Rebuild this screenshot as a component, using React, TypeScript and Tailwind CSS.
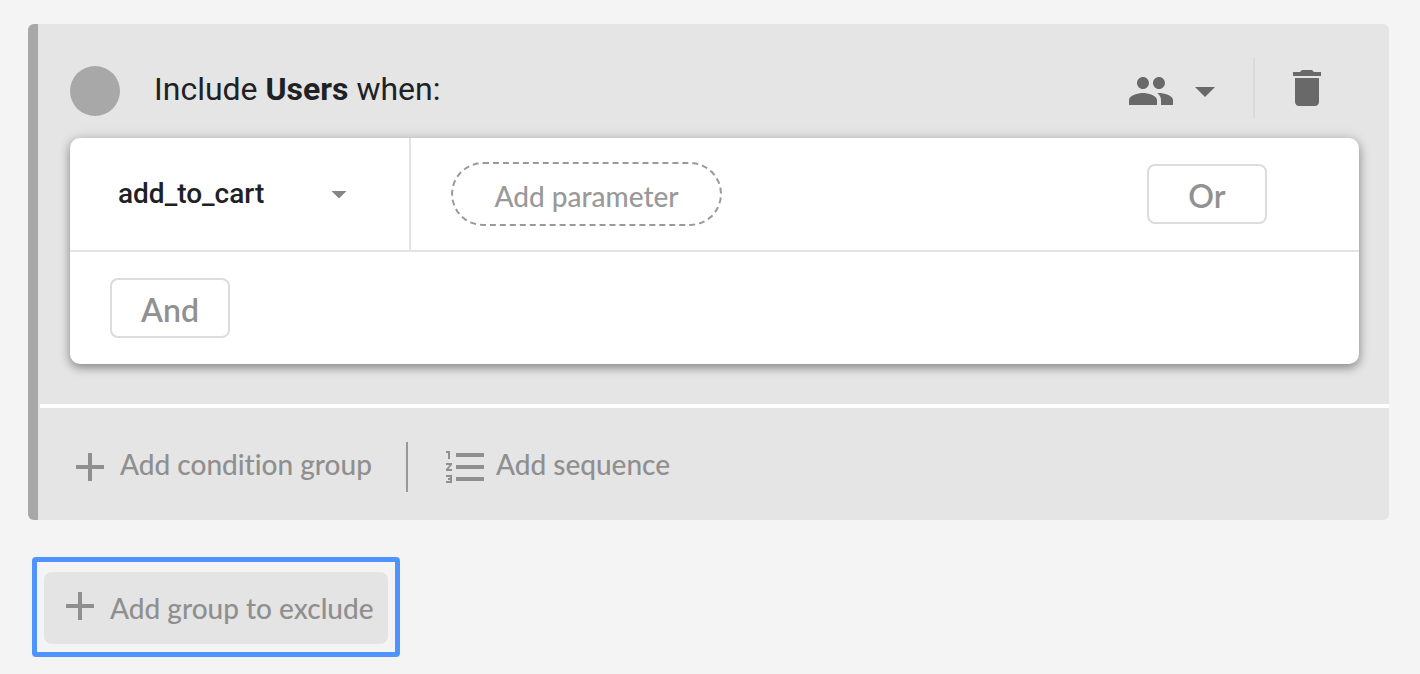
import clsx from "clsx"
import type { ReactNode } from "react"
import { MdAdd, MdArrowDropDown, MdDelete, MdFormatListNumbered, MdPeople } from "react-icons/md"

const LABEL_FONT = "font-['Lato','Liberation_Sans',sans-serif] [font-variant-ligatures:none]"

const OperatorButton = ({ children }: { children: ReactNode }) => (
	<button
		className={clsx(
			"h-15 w-30 shrink-0 rounded-lg border-2 border-[#dcdcdc] bg-white pt-1 text-[32px] leading-none font-semibold text-[#919191]",
			LABEL_FONT,
		)}
		type="button">
		{children}
	</button>
)

const ActionButton = ({ children, className }: { children: ReactNode; className?: string }) => (
	<button
		className={clsx(
			"flex items-center gap-1.5 text-[28px] leading-9 font-medium whitespace-nowrap text-[#8f8f8f]",
			LABEL_FONT,
			className,
		)}
		type="button">
		{children}
	</button>
)

const GroupHeader = () => (
	<header className="flex h-[114px] items-center pt-5 pr-[58px] pl-8">
		<span className="size-[50px] shrink-0 rounded-full bg-[#a8a8a8]" />
		<h2 className="ml-[34px] pb-1 text-[32px] leading-10 text-[#202124]">
			Include <b className="font-bold">Users</b> when:
		</h2>
		<div className="ml-auto flex items-center">
			<button aria-label="Scope" className="flex items-center gap-1.5 text-[#696969]" type="button">
				<MdPeople size={48} />
				<MdArrowDropDown size={48} />
			</button>
			<div className="ml-6 flex items-center gap-7 pb-1.5">
				<span className="h-15 w-0.5 bg-[#dadada]" />
				<button aria-label="Delete group" className="text-[#696969]" type="button">
					<MdDelete size={48} />
				</button>
			</div>
		</div>
	</header>
)

const ConditionCard = () => (
	<div className="mr-[30px] ml-8 rounded-[10px] bg-white shadow-[0_4px_10px_rgba(0,0,0,0.35),0_0_14px_rgba(0,0,0,0.12)]">
		<div className="flex h-[114px] border-b-2 border-[#e3e3e3]">
			<div className="relative flex w-[341px] shrink-0 items-center border-r-2 border-[#e3e3e3]">
				<select
					aria-label="Event"
					className="size-full appearance-none bg-transparent pl-12 text-[28px] font-medium text-[#202124]"
					defaultValue="add_to_cart">
					<option value="add_to_cart">add_to_cart</option>
				</select>
				<MdArrowDropDown className="pointer-events-none absolute right-[52px] text-[#858585]" size={36} />
			</div>
			<div className="flex flex-1 items-center justify-between pr-[92px] pl-10">
				<button
					className={clsx(
						"h-16 w-[271px] rounded-full border-2 border-dashed border-[#999999] pt-1 text-[28px] leading-none font-medium text-[#999999]",
						LABEL_FONT,
					)}
					type="button">
					Add parameter
				</button>
				<OperatorButton>Or</OperatorButton>
			</div>
		</div>
		<div className="flex h-28 items-center pl-10">
			<OperatorButton>And</OperatorButton>
		</div>
	</div>
)

export default function App() {
	return (
		<main className="min-h-screen bg-[#f4f4f4] pt-6 pr-[31px] pb-4 pl-7 font-['Roboto','Liberation_Sans',sans-serif]">
			<section className="rounded-md border-l-10 border-[#a8a8a8] bg-[#e5e5e5]">
				<GroupHeader />
				<ConditionCard />
				<div className="mt-10 ml-0.5 h-1 bg-white" />
				<footer className="flex h-28 items-center pt-1.5 pl-7">
					<ActionButton>
						<MdAdd size={48} />
						<span className="pb-1.5">Add condition group</span>
					</ActionButton>
					<span className="mr-[34px] ml-[34px] h-[50px] w-0.5 bg-[#999999]" />
					<ActionButton>
						<MdFormatListNumbered size={48} />
						<span className="pb-1.5">Add sequence</span>
					</ActionButton>
				</footer>
			</section>

			<div className="mt-[37px] ml-1 inline-flex rounded-sm border-5 border-[#4f93fe] px-[7px] pt-2.5 pb-2">
				<ActionButton className="h-18 rounded-lg bg-[#e4e4e4] pr-3.5 pl-3">
					<MdAdd className="mb-1" size={48} />
					Add group to exclude
				</ActionButton>
			</div>
		</main>
	)
}
